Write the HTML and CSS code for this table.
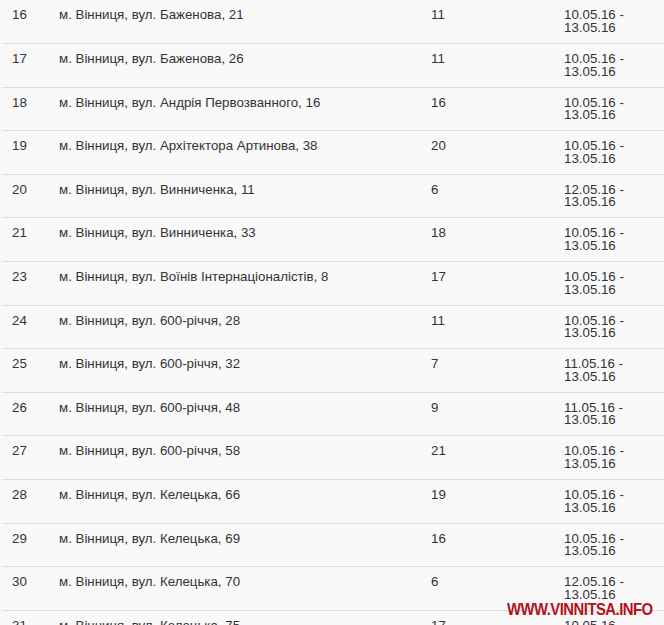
FILE: index.html
```html
<!doctype html>
<html lang="uk">
  <head>
    <meta charset="utf-8" />
    <meta name="viewport" content="width=device-width, initial-scale=1" />
    <title>Графік</title>
    <link rel="stylesheet" href="styles.css">
  </head>
  <body>
    <div class="wrap">
      <table class="schedule">
        <colgroup>
          <col class="c-num" />
          <col class="c-addr" />
          <col class="c-count" />
          <col class="c-date" />
        </colgroup>
        <tbody>
          <tr><td>16</td><td>м. Вінниця, вул. Баженова, 21</td><td>11</td><td>10.05.16 - 13.05.16</td></tr>
          <tr><td>17</td><td>м. Вінниця, вул. Баженова, 26</td><td>11</td><td>10.05.16 - 13.05.16</td></tr>
          <tr><td>18</td><td>м. Вінниця, вул. Андрія Первозванного, 16</td><td>16</td><td>10.05.16 - 13.05.16</td></tr>
          <tr><td>19</td><td>м. Вінниця, вул. Архітектора Артинова, 38</td><td>20</td><td>10.05.16 - 13.05.16</td></tr>
          <tr><td>20</td><td>м. Вінниця, вул. Винниченка, 11</td><td>6</td><td>12.05.16 - 13.05.16</td></tr>
          <tr><td>21</td><td>м. Вінниця, вул. Винниченка, 33</td><td>18</td><td>10.05.16 - 13.05.16</td></tr>
          <tr><td>23</td><td>м. Вінниця, вул. Воїнів Інтернаціоналістів, 8</td><td>17</td><td>10.05.16 - 13.05.16</td></tr>
          <tr><td>24</td><td>м. Вінниця, вул. 600-річчя, 28</td><td>11</td><td>10.05.16 - 13.05.16</td></tr>
          <tr><td>25</td><td>м. Вінниця, вул. 600-річчя, 32</td><td>7</td><td>11.05.16 - 13.05.16</td></tr>
          <tr><td>26</td><td>м. Вінниця, вул. 600-річчя, 48</td><td>9</td><td>11.05.16 - 13.05.16</td></tr>
          <tr><td>27</td><td>м. Вінниця, вул. 600-річчя, 58</td><td>21</td><td>10.05.16 - 13.05.16</td></tr>
          <tr><td>28</td><td>м. Вінниця, вул. Келецька, 66</td><td>19</td><td>10.05.16 - 13.05.16</td></tr>
          <tr><td>29</td><td>м. Вінниця, вул. Келецька, 69</td><td>16</td><td>10.05.16 - 13.05.16</td></tr>
          <tr><td>30</td><td>м. Вінниця, вул. Келецька, 70</td><td>6</td><td>12.05.16 - 13.05.16</td></tr>
          <tr><td>31</td><td>м. Вінниця, вул. Келецька, 75</td><td>17</td><td>10.05.16 - 13.05.16</td></tr>
        </tbody>
      </table>
      <div class="watermark">WWW.VINNITSA.INFO</div>
    </div>
  </body>
</html>
```

FILE: styles.css
```css
html,
body {
  margin: 0;
  background: #f9f9f9;
  overflow: hidden;
}
.wrap {
  position: relative;
  height: 625px;
  padding-left: 2px;
  font-family: "Liberation Sans", Arial, sans-serif;
  font-size: 13.3px;
  color: #333;
}
.schedule {
  border-collapse: collapse;
  table-layout: fixed;
  width: 662px;
}
.c-num {
  width: 47px;
}
.c-addr {
  width: 372px;
}
.c-count {
  width: 133px;
}
.c-date {
  width: 110px;
}
.schedule td {
  box-sizing: border-box;
  height: 43.6px;
  padding: 9px 10px 0;
  vertical-align: top;
  line-height: 12.5px;
  border-bottom: 1px solid #dedede;
}
.schedule td:last-child {
  padding-right: 20px;
}
.watermark {
  position: absolute;
  left: 507px;
  top: 600px;
  font-size: 17px;
  font-weight: bold;
  color: #b3121c;
  letter-spacing: -0.6px;
  transform: scaleX(0.875);
  transform-origin: left top;
}
```
